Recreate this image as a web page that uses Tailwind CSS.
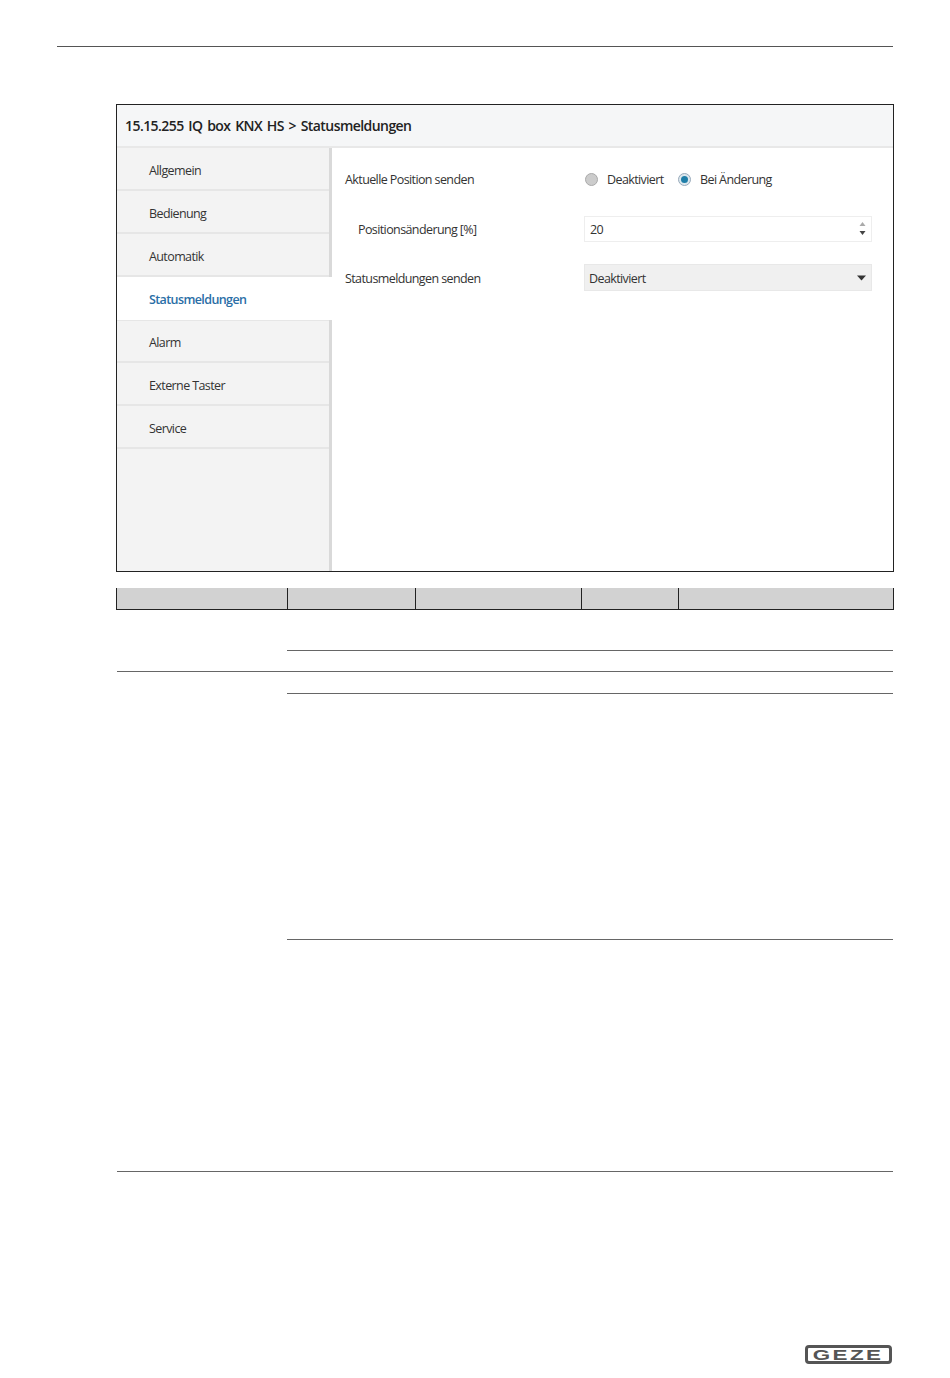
<!DOCTYPE html>
<html lang="de">
<head>
  <meta charset="UTF-8">
  <title>IQ box KNX HS - Statusmeldungen</title>
  <script src="https://cdn.jsdelivr.net/npm/@tailwindcss/browser@4"></script>
</head>
<body class="bg-white w-[950px] h-[1378px] overflow-hidden font-['Open_Sans',sans-serif] text-[#333]">
  <div class="pt-[46px] pl-[57px] pr-[57px]">
    <div class="h-px bg-[#555]"></div>
  </div>

  <div class="mt-[57px] ml-[116px] w-[778px]">
    <!-- parameter window -->
    <div class="border border-[#222] h-[468px] flex flex-col">
      <div class="h-[43px] shrink-0 bg-[#f5f6f7] border-b-2 border-[#e8e8e8] pl-2 flex items-center text-[14px] font-semibold tracking-[-0.56px] [word-spacing:1.6px] text-[#222]">15.15.255 IQ box KNX HS &gt; Statusmeldungen</div>
      <div class="flex flex-1 min-h-0">
        <div class="w-[215px] shrink-0 bg-[#f3f3f3] border-r-[3px] border-[#d9d9d9] text-[12.5px] tracking-[-0.6px]">
          <div class="h-[43px] pl-8 pt-[5px] flex items-center border-b-2 border-[#e6e6e6]">Allgemein</div>
          <div class="h-[43px] pl-8 pt-[5px] flex items-center border-b-2 border-[#e6e6e6]">Bedienung</div>
          <div class="h-[43px] pl-8 pt-[5px] flex items-center border-b-2 border-[#e6e6e6]">Automatik</div>
          <div class="h-[43px] pl-8 pt-[3px] flex items-center bg-white -mr-[3px] relative text-[#2a6ea6] font-semibold">Statusmeldungen</div>
          <div class="h-[44px] pl-8 pt-[4px] flex items-center border-y-2 border-[#e6e6e6] -mt-px">Alarm</div>
          <div class="h-[43px] pl-8 pt-[5px] flex items-center border-b-2 border-[#e6e6e6]">Externe Taster</div>
          <div class="h-[43px] pl-8 pt-[5px] flex items-center border-b-2 border-[#e6e6e6]">Service</div>
        </div>
        <div class="flex-1 pl-[13px] pr-[21px] pt-[17px] text-[12.5px] tracking-[-0.6px]">
          <div class="flex items-center h-[28px]">
            <div class="w-[239px] shrink-0 pt-[2px]">Aktuelle Position senden</div>
            <div class="flex items-center">
              <span class="ml-px w-[13px] h-[13px] rounded-full bg-[#ccc] border border-[#aaa]"></span>
              <span class="ml-[9px] w-[57px] pt-[2px]">Deaktiviert</span>
              <span class="ml-[14px] w-[13px] h-[13px] rounded-full border border-[#9ab] bg-[#dde8ee] flex items-center justify-center"><span class="w-[7px] h-[7px] rounded-full bg-[#1f7ea8]"></span></span>
              <span class="ml-[9px] pt-[2px]">Bei Änderung</span>
            </div>
          </div>
          <div class="flex items-center h-[26px] mt-[23px]">
            <div class="w-[239px] shrink-0 pl-[13px] pt-[2px]">Positionsänderung [%]</div>
            <div class="flex-1 h-[26px] border border-[#eee] flex items-center justify-between pl-[5px] pr-[5px]">
              <span class="pt-[2px]">20</span>
              <svg width="7" height="16" viewBox="0 0 7 16"><path d="M3.5 1 L6.5 5 H0.5 Z" fill="#aaa"/><path d="M3.5 14 L6.5 10 H0.5 Z" fill="#444"/></svg>
            </div>
          </div>
          <div class="flex items-center h-[27px] mt-[22px]">
            <div class="w-[239px] shrink-0 pt-[4px]">Statusmeldungen senden</div>
            <div class="flex-1 h-[27px] bg-[#f0f0f0] border border-[#e8e8e8] flex items-center justify-between pl-[4px] pr-[5px]">
              <span class="pt-[3px]">Deaktiviert</span>
              <svg width="9" height="6" viewBox="0 0 9 6"><path d="M0 0.5 H9 L4.5 5.5 Z" fill="#333"/></svg>
            </div>
          </div>
        </div>
      </div>
    </div>

    <!-- table header -->
    <div class="mt-4 flex h-[22px] bg-[#d2d2d2] border border-t-0 border-[#222] divide-x divide-[#222]">
      <div class="w-[171px]"></div>
      <div class="w-[128px]"></div>
      <div class="w-[166px]"></div>
      <div class="w-[97px]"></div>
      <div class="flex-1"></div>
    </div>

    <!-- table body -->
    <div class="ml-px w-[776px]">
      <div class="flex border-b border-[#666]">
        <div class="w-[170px] shrink-0"></div>
        <div class="flex-1">
          <div class="h-[41px] border-b border-[#666]"></div>
          <div class="h-[20px]"></div>
        </div>
      </div>
      <div class="flex border-b border-[#666]">
        <div class="w-[170px] shrink-0"></div>
        <div class="flex-1">
          <div class="h-[22px] border-b border-[#666]"></div>
          <div class="h-[246px] border-b border-[#666]"></div>
          <div class="h-[231px]"></div>
        </div>
      </div>
    </div>
  </div>

  <!-- logo -->
  <div class="mt-[173px] ml-[805px] w-[87px] h-[19px] rounded-[4px] border-[3px] border-[#555] bg-white flex items-center justify-center overflow-hidden">
    <span class="font-['Liberation_Sans',sans-serif] font-bold text-[14px] leading-none text-[#555] tracking-[1.5px] scale-x-[1.6]">GEZE</span>
  </div>
</body>
</html>
